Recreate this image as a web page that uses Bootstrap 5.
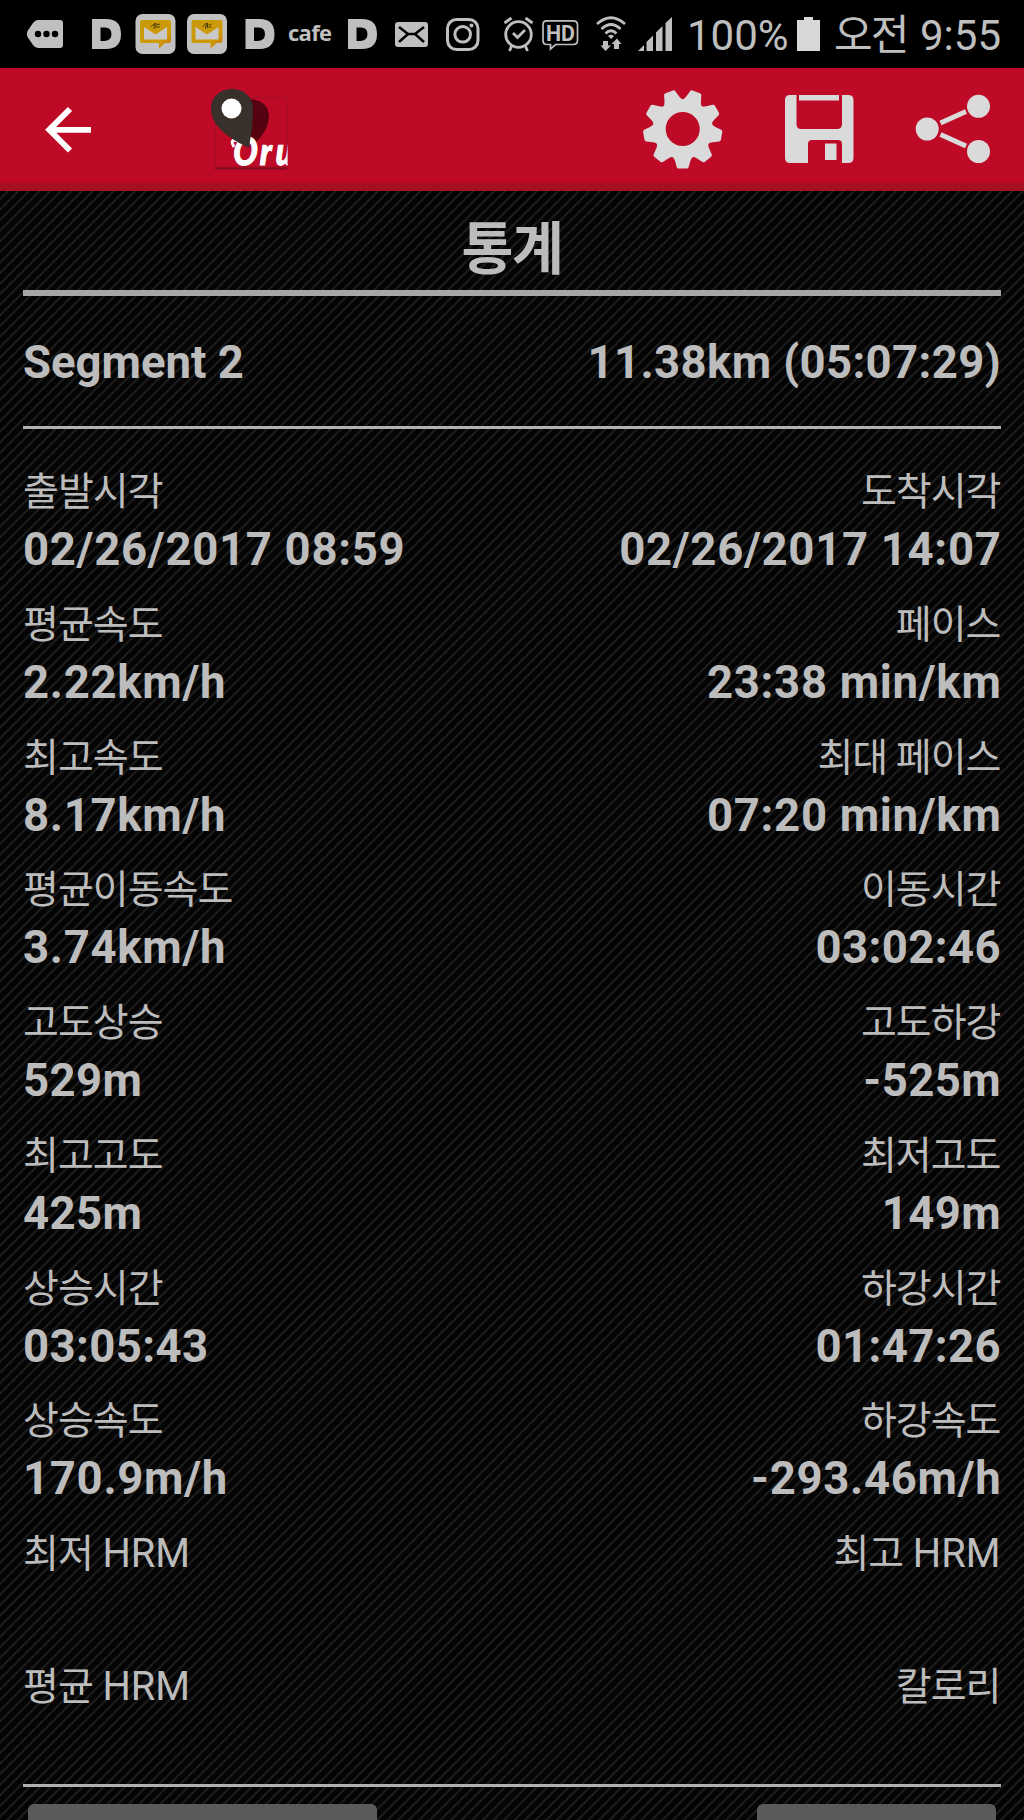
<!DOCTYPE html>
<html lang="ko">
<head>
<meta charset="utf-8">
<meta name="viewport" content="width=device-width, initial-scale=1">
<title>통계</title>
<link href="https://cdn.jsdelivr.net/npm/bootstrap@5.3.0/dist/css/bootstrap.min.css" rel="stylesheet">
<style>
body{font-family:Roboto,"Noto Sans CJK KR",sans-serif;color:#bcbcbc;background:#040404;height:1820px;overflow:hidden}
.screen{width:1024px;height:1820px;overflow:hidden}
.statusbar{height:68px;background:#000;color:#bfbfbf;flex:none}
.statusbar svg,.appbar svg{display:block;flex:none}
.st-cafe{width:59px;font:bold 22px/1 "Open Sans",sans-serif;letter-spacing:-.7px;padding-bottom:4px;text-indent:-1px}
.st-text{font-size:42px;line-height:68px;padding-top:4px;white-space:nowrap}
.st-pct{width:106px}
.st-batt{width:41px}
.st-ampm{width:86px;letter-spacing:-2px}
.appbar{height:123px;background:#be0a26;border-bottom:8px solid #a50f20;flex:none}
.stats{padding:0 23px;background:repeating-linear-gradient(135deg,#040404 0,#040404 4px,#1e1e1e 5.5px,#1e1e1e 6px,#040404 7.475px)}
.page-title{height:99px;font-size:56.5px;font-weight:700;line-height:119px;letter-spacing:-1.5px}
.rule-thick{height:6px;background:#a6a6a6}
.rule-thin{height:3px;background:#b0b2b0}
.segment{height:130px;font-size:45.5px;font-weight:700;line-height:134px}
.seg-total{letter-spacing:.37px}
.stat-grid{padding-top:40px;height:1355px}
.stat-row{height:132.75px}
.stat-label{font-size:39px;line-height:46px;letter-spacing:-1px;height:50px}
.stat-label .unit{font-size:39.8px;letter-spacing:0;margin-left:1px}
.text-end .stat-label,.label-end{margin-right:.5px}
.stat-value{font-size:45.5px;font-weight:700;line-height:62px;letter-spacing:.4px}
.stat-value.wide{letter-spacing:.7px}
.text-end .stat-value.wide{margin-right:-.5px}
.foot-btn{height:30px;background:#5a5a5c;border-radius:6px;margin-top:17px}
.foot-a{width:349px;margin-left:5px}.foot-b{width:239px;margin-right:5px}
</style>
<script src="https://cdn.jsdelivr.net/npm/bootstrap@5.3.0/dist/js/bootstrap.bundle.min.js"></script>
</head>
<body>
<div class="screen d-flex flex-column">
<div class="statusbar d-flex align-items-center">
<svg width="92" height="68" viewBox="0 0 92 68"><path fill="#bfbfbf" d="M38 20H60Q63 20 63 23V45Q63 48 60 48H38Q35 48 33 45L27.500 37Q26 34 27.500 31L33 23Q35 20 38 20Z"/><g><circle cx="38" cy="34" r="3.200"/><circle cx="46.500" cy="34" r="3.200"/><circle cx="55" cy="34" r="3.200"/></g></svg>
<svg width="43" height="68" viewBox="92 0 43 68"><path fill="#bfbfbf" fill-rule="evenodd" d="M92 19H106Q121 19 121 34T106 49H92ZM100.500 27.500V41H104Q111.500 41 111.500 34T104 27.500Z"/></svg>
<svg width="52" height="68" viewBox="135 0 52 68"><defs><linearGradient id="gold" x2="1" y2="1"><stop stop-color="#c79a0c"/><stop offset=".7" stop-color="#cf9a06"/><stop offset="1" stop-color="#c8700f"/></linearGradient></defs><rect x="135.500" y="14" width="40" height="40" rx="7" fill="#c2c2c2"/><path fill="url(#gold)" d="M142 20H169Q171 20 171 22V41Q171 43 169 43H165L159 48.500V43H142Q140 43 140 41V22Q140 20 142 20Z"/><path fill="#c9c9c9" d="M144 27L155.500 34.500L167 27V39.500H144Z"/><path d="M151 27L155 23L154 29M156 23V28M157 25L160 24M157 27H160" fill="none" stroke="#4c3c0a"/></svg>
<svg width="58" height="68" viewBox="135.500 0 58 68"><rect x="135.500" y="14" width="40" height="40" rx="7" fill="#c2c2c2"/><path fill="url(#gold)" d="M142 20H169Q171 20 171 22V41Q171 43 169 43H165L159 48.500V43H142Q140 43 140 41V22Q140 20 142 20Z"/><path fill="#c9c9c9" d="M144 27L155.500 34.500L167 27V39.500H144Z"/><path d="M151 27L155 23L154 29M156 23V28M157 25L160 24M157 27H160" fill="none" stroke="#4c3c0a"/></svg>
<svg width="44" height="68" viewBox="91.500 0 44 68"><path fill="#bfbfbf" fill-rule="evenodd" d="M92 19H106Q121 19 121 34T106 49H92ZM100.500 27.500V41H104Q111.500 41 111.500 34T104 27.500Z"/></svg>
<span class="st-cafe">cafe</span>
<svg width="46" height="68" viewBox="92 0 46 68"><path fill="#bfbfbf" fill-rule="evenodd" d="M92 19H106Q121 19 121 34T106 49H92ZM100.500 27.500V41H104Q111.500 41 111.500 34T104 27.500Z"/></svg>
<svg width="51" height="68" viewBox="394 0 51 68"><rect x="395" y="22" width="33" height="25" rx="3" fill="#bfbfbf"/><path d="M399 27L408 34H415L424 27M399 42L408 34M424 42L415 34" fill="none" stroke="#000" stroke-width="2.500"/></svg>
<svg width="57" height="68" viewBox="445 0 57 68" fill="none" stroke="#bfbfbf"><rect x="447.500" y="19.500" width="30.500" height="30" rx="9" stroke-width="3"/><circle cx="462.700" cy="34.300" r="7.800" stroke-width="3"/><circle cx="471.500" cy="25.500" r="2" fill="#bfbfbf" stroke="none"/></svg>
<svg width="39" height="68" viewBox="502 0 39 68" fill="none" stroke="#bfbfbf" stroke-width="2.800"><circle cx="518.500" cy="34.500" r="12.800"/><path d="M513 33L517.500 37.500L525 30M504.500 23L511.500 18M525.500 18L532.500 23M512 45L509.500 51M525 45L527.500 51"/></svg>
<svg width="54" height="68" viewBox="541 0 54 68" fill="none" stroke="#bfbfbf"><path stroke-width="1.700" d="M546.500 20.800H573Q577.500 20.800 577.500 25V40.500Q577.500 44.500 573 44.500H555.500L550.500 49V44.500H547Q543 44.500 543 40.500V25Q543 20.800 546.500 20.800Z"/><text x="546" y="40.500" font-family="Roboto" font-size="21.500" font-weight="700" fill="#bfbfbf" stroke="none" textLength="29" lengthAdjust="spacingAndGlyphs">HD</text></svg>
<svg width="42" height="68" viewBox="595 0 42 68" fill="none" stroke="#bfbfbf" stroke-width="2.800"><path d="M597 24Q611 11.500 625 24M601.500 29Q611 20 620.500 29M605.500 33.500Q611 28 616.500 33.500"/><path fill="#bfbfbf" stroke="none" d="M608 36Q611 33.500 614 36L611 39ZM603 41H608V45.500H611L605.500 51L600.500 45.500H603ZM614 49V44H611.500L617 38.500L621.500 44H619V49Z"/></svg>
<svg width="50" height="68" viewBox="637 0 50 68" fill="#bfbfbf"><path d="M638 51L644 45V51ZM646.500 51V42L653 35.500V51ZM656 51V32.500L662.500 26V51ZM665.500 51V23L672 17V51Z"/></svg>
<span class="st-text st-pct">100%</span>
<svg class="st-batt" height="68" viewBox="793 0 41 68"><path fill="#d8d8d8" d="M797 20H804V17H813V20H820V51H797Z"/></svg>
<span class="st-text st-ampm">오전</span><span class="st-text">9:55</span>
</div>
<header class="appbar d-flex">
<svg width="210" height="114" viewBox="0 68 210 114"><path d="M91 129.800H49M70 109L49.200 129.800L70 150.500" fill="none" stroke="#fff" stroke-width="5.800"/></svg>
<svg width="420" height="114" viewBox="210 68 420 114"><defs><clipPath id="lc"><rect x="215" y="90" width="72.500" height="80"/></clipPath></defs><path d="M215 97.500H287V167H215Z" fill="#be0a26" stroke="#a01024"/><path d="M215 168.500H287" stroke="#7e0b1c" stroke-width="2"/><path d="M250 99Q269 101 269 117Q268 134 250 147Z" fill="#560311"/><g clip-path="url(#lc)"><text transform="translate(233 165) skewX(-2) scale(.84 1)" x="0 32 50.500" font-family="Lato" font-style="italic" font-weight="900" font-size="38" fill="#fff" stroke="#fff" stroke-width="1.200">Oru</text><path d="M238 141Q229 138 234 147" stroke="#fff" stroke-width="3" fill="none"/></g><path d="M232 89C246 89 253 99 253 109C253 124 251 134 249 148C239 143 211 130 211 109C211 98 219 89 232 89Z" fill="#3a302b"/><circle cx="231.500" cy="108.500" r="10" fill="#fff"/></svg>
<svg width="394" height="114" viewBox="630 68 394 114" fill="#dadada"><g transform="translate(682.700 129)"><circle r="23.500" fill="none" stroke="#dadada" stroke-width="13"/><path id="tooth" d="M-10.500 26Q-7.500 31 -6 38Q-5.500 39.500 -4 39.500H4Q5.500 39.500 6 38Q7.500 31 10.500 26Z"/><use href="#tooth" transform="rotate(40)"/><use href="#tooth" transform="rotate(80)"/><use href="#tooth" transform="rotate(120)"/><use href="#tooth" transform="rotate(160)"/><use href="#tooth" transform="rotate(200)"/><use href="#tooth" transform="rotate(240)"/><use href="#tooth" transform="rotate(280)"/><use href="#tooth" transform="rotate(320)"/></g>
<path d="M790 95H796.500V124Q796.500 129 801 129H837Q842 129 842 124V95H848Q853.500 95 853.500 100V158Q853.500 163 848 163H842V144Q842 140 838 140H812Q808 140 808 144V163H790Q785 163 785 158V100Q785 95 790 95ZM799 95H839V100.500H799ZM825 143.500H836.500V160H825Z"/>
<circle cx="927.200" cy="129" r="11.500"/><circle cx="978.500" cy="106.300" r="11.500"/><circle cx="978.500" cy="151.500" r="11.500"/><path d="M940.500 123L966 111.500M940.500 134.500L966 146" stroke="#dadada" stroke-width="5"/></svg>
</header>
<main class="stats flex-grow-1">
<h1 class="page-title text-center m-0">통계</h1>
<div class="rule-thick"></div>
<div class="segment d-flex justify-content-between"><span>Segment 2</span><span class="seg-total">11.38km (05:07:29)</span></div>
<div class="rule-thin"></div>
<div class="stat-grid">
<div class="stat-row d-flex justify-content-between"><div><div class="stat-label">출발시각</div><div class="stat-value wide">02/26/2017 08:59</div></div><div class="text-end"><div class="stat-label">도착시각</div><div class="stat-value wide">02/26/2017 14:07</div></div></div>
<div class="stat-row d-flex justify-content-between"><div><div class="stat-label">평균속도</div><div class="stat-value wide">2.22km/h</div></div><div class="text-end"><div class="stat-label">페이스</div><div class="stat-value wide">23:38 min/km</div></div></div>
<div class="stat-row d-flex justify-content-between"><div><div class="stat-label">최고속도</div><div class="stat-value wide">8.17km/h</div></div><div class="text-end"><div class="stat-label">최대 페이스</div><div class="stat-value wide">07:20 min/km</div></div></div>
<div class="stat-row d-flex justify-content-between"><div><div class="stat-label">평균이동속도</div><div class="stat-value wide">3.74km/h</div></div><div class="text-end"><div class="stat-label">이동시간</div><div class="stat-value">03:02:46</div></div></div>
<div class="stat-row d-flex justify-content-between"><div><div class="stat-label">고도상승</div><div class="stat-value">529m</div></div><div class="text-end"><div class="stat-label">고도하강</div><div class="stat-value">-525m</div></div></div>
<div class="stat-row d-flex justify-content-between"><div><div class="stat-label">최고고도</div><div class="stat-value">425m</div></div><div class="text-end"><div class="stat-label">최저고도</div><div class="stat-value">149m</div></div></div>
<div class="stat-row d-flex justify-content-between"><div><div class="stat-label">상승시간</div><div class="stat-value">03:05:43</div></div><div class="text-end"><div class="stat-label">하강시간</div><div class="stat-value">01:47:26</div></div></div>
<div class="stat-row d-flex justify-content-between"><div><div class="stat-label">상승속도</div><div class="stat-value wide">170.9m/h</div></div><div class="text-end"><div class="stat-label">하강속도</div><div class="stat-value wide">-293.46m/h</div></div></div>
<div class="stat-row d-flex justify-content-between"><div class="stat-label">최저 <span class="unit">HRM</span></div><div class="stat-label label-end">최고 <span class="unit">HRM</span></div></div>
<div class="stat-row d-flex justify-content-between"><div class="stat-label">평균 <span class="unit">HRM</span></div><div class="stat-label label-end">칼로리</div></div>
</div>
<div class="rule-thin"></div>
<div class="d-flex justify-content-between"><div class="foot-btn foot-a"></div><div class="foot-btn foot-b"></div></div>
</main>
</div>
</body>
</html>
